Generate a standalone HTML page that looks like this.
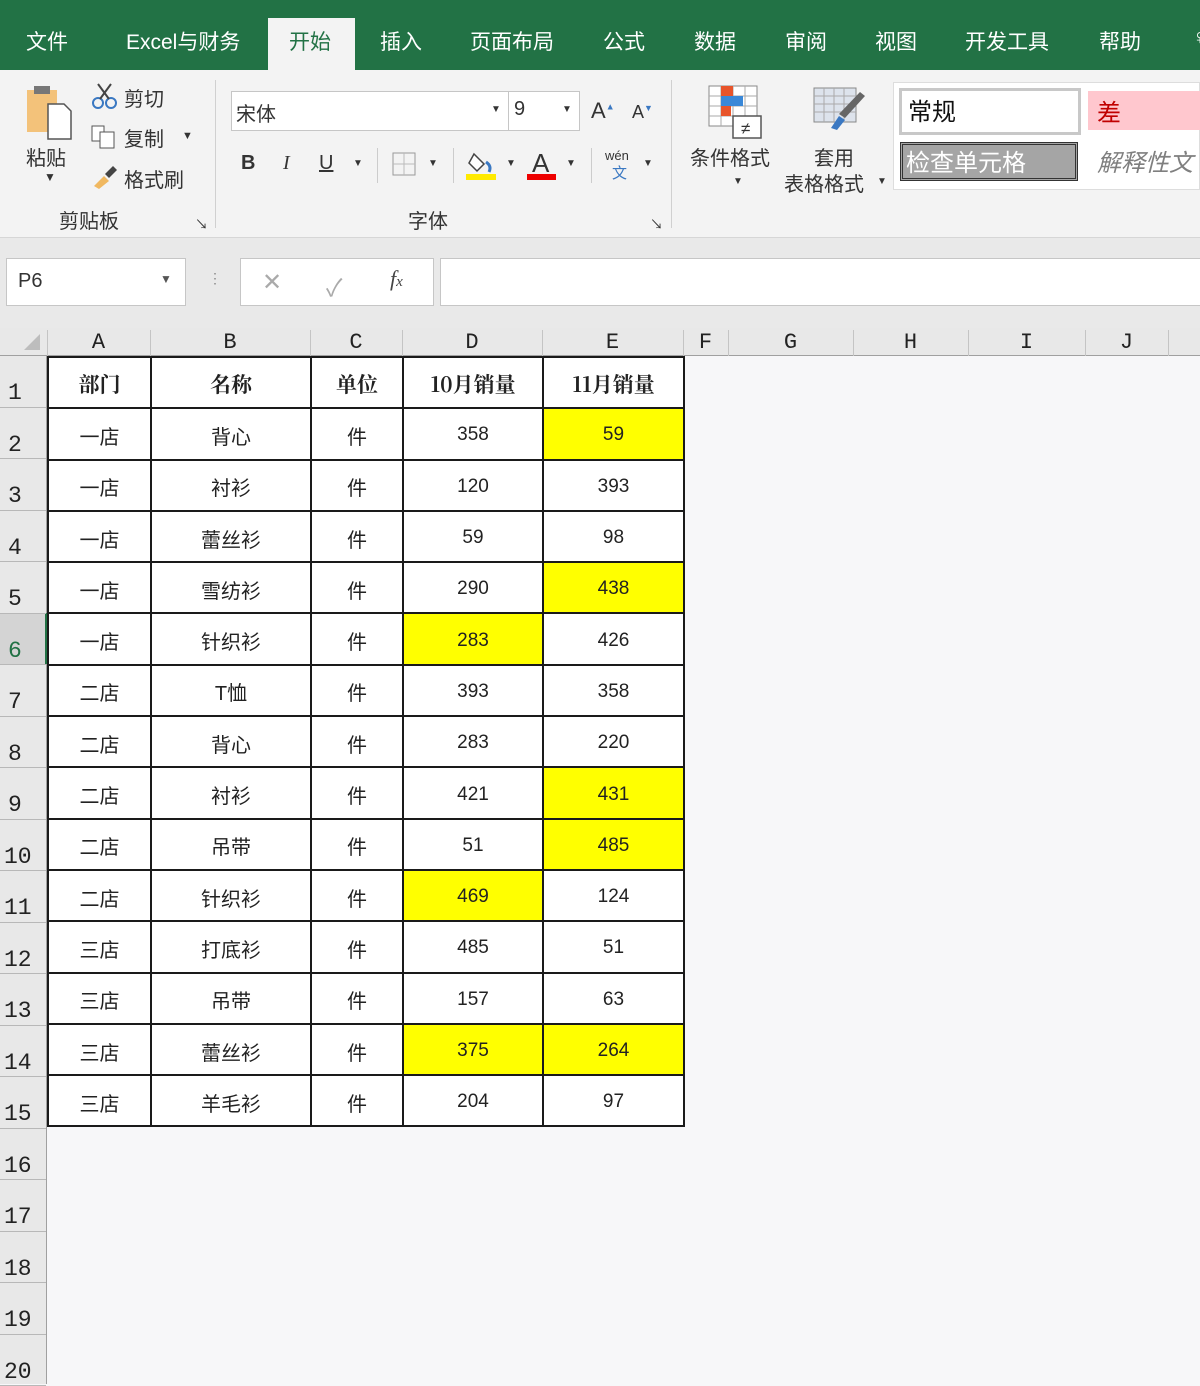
<!DOCTYPE html>
<html><head><meta charset="utf-8">
<style>
*{margin:0;padding:0;box-sizing:border-box}
body{width:1200px;height:1384px;overflow:hidden;background:#f7f7f9;font-family:"Liberation Sans","Noto Sans CJK SC",sans-serif;position:relative;color:#222}
.a{position:absolute}
.tabs{left:0;top:0;width:1200px;height:70px;background:#227245}
.tab{position:absolute;top:26px;color:#fff;font-size:21px;white-space:nowrap}
.ribbon{left:0;top:70px;width:1200px;height:168px;background:#f3f3f3;border-bottom:1px solid #d6d6d6}
.fbar{left:0;top:238px;width:1200px;height:90px;background:#e9e9e9}
.t{position:absolute;font-size:20px;color:#333;white-space:nowrap}
.box{position:absolute;background:#fff;border:1px solid #c6c6c6}
.colh{left:0;top:328px;width:1200px;height:28px;background:#e8e8e8;border-bottom:1px solid #a0a0a0}
.ch{position:absolute;top:330px;font-family:"Liberation Mono",monospace;font-size:22px;color:#222;text-align:center}
.cl{position:absolute;top:330px;width:1px;height:26px;background:#c4c4c4}
.rowh{left:0;top:356px;width:47px;height:1028px;background:#e8e8e8;border-right:1px solid #a0a0a0}
.rn{position:absolute;left:0;width:46px;font-family:"Liberation Mono",monospace;font-size:23px;color:#222;padding-left:8px;border-bottom:1px solid #b8b8b8}
table{position:absolute;left:47px;top:356px;border-collapse:collapse;table-layout:fixed;background:#fff}
td{border:2px solid #1a1a1a;height:51.3px;text-align:center;font-size:20px;padding-top:3px;font-family:"Liberation Sans","Noto Sans CJK SC",sans-serif}
tr.h td{font-weight:bold;font-family:"Noto Serif CJK SC","Noto Sans CJK SC",serif;font-size:21px}
td.y{background:#ffff00}
.n{font-size:19px}
</style></head><body>
<div class="a tabs"></div>
<div class="a" style="left:268px;top:18px;width:87px;height:54px;background:#f3f3f3"></div>
<div class="tab" style="left:26px">文件</div>
<div class="tab" style="left:126px">Excel与财务</div>
<div class="tab" style="left:289px;color:#227245">开始</div>
<div class="tab" style="left:380px">插入</div>
<div class="tab" style="left:470px">页面布局</div>
<div class="tab" style="left:603px">公式</div>
<div class="tab" style="left:694px">数据</div>
<div class="tab" style="left:785px">审阅</div>
<div class="tab" style="left:875px">视图</div>
<div class="tab" style="left:965px">开发工具</div>
<div class="tab" style="left:1099px">帮助</div>
<div class="tab" style="left:1192px">♀</div>

<div class="a ribbon"></div>
<svg class="a" style="left:24px;top:84px" width="56" height="56"><rect x="3" y="6" width="30" height="42" fill="#f3c27a"/><rect x="10" y="2" width="16" height="8" fill="#777"/><path d="M24 20h16l7 7v28H24z" fill="#fff" stroke="#555" stroke-width="1.5"/></svg>
<div class="t" style="left:26px;top:142px">粘贴</div>
<div class="t" style="left:44px;top:170px;font-size:12px">▼</div>
<svg class="a" style="left:91px;top:82px" width="28" height="28"><circle cx="7" cy="21" r="5" fill="none" stroke="#3a78c2" stroke-width="2"/><circle cx="20" cy="21" r="5" fill="none" stroke="#3a78c2" stroke-width="2"/><path d="M9 17L20 2M18 17L7 2" stroke="#444" stroke-width="2"/></svg>
<div class="t" style="left:124px;top:83px">剪切</div>
<svg class="a" style="left:91px;top:124px" width="28" height="26"><rect x="1" y="2" width="12" height="15" fill="#fff" stroke="#555"/><rect x="9" y="8" width="14" height="16" fill="#fff" stroke="#555"/></svg>
<div class="t" style="left:124px;top:123px">复制</div>
<div class="t" style="left:182px;top:130px;font-size:11px">▼</div>
<svg class="a" style="left:91px;top:164px" width="30" height="26"><path d="M3 22l10-10 5 5-10 8z" fill="#f0b860"/><path d="M14 10l8-8 4 4-8 8z" fill="#444"/></svg>
<div class="t" style="left:124px;top:164px">格式刷</div>
<div class="t" style="left:59px;top:205px">剪贴板</div>
<div class="t" style="left:195px;top:214px;font-size:13px">↘</div>
<div class="a" style="left:215px;top:80px;width:1px;height:148px;background:#d0d0d0"></div>
<div class="box" style="left:231px;top:91px;width:278px;height:40px"></div>
<div class="t" style="left:236px;top:98px">宋体</div>
<div class="t" style="left:491px;top:104px;font-size:10px">▼</div>
<div class="box" style="left:508px;top:91px;width:72px;height:40px"></div>
<div class="t" style="left:514px;top:98px">9</div>
<div class="t" style="left:562px;top:104px;font-size:10px">▼</div>
<div class="t" style="left:591px;top:98px;font-size:22px">A<sup style="font-size:9px;color:#3a78c2">▲</sup></div>
<div class="t" style="left:632px;top:102px;font-size:18px">A<sup style="font-size:9px;color:#3a78c2">▼</sup></div>
<div class="t" style="left:241px;top:152px;font-weight:bold">B</div>
<div class="t" style="left:283px;top:152px;font-style:italic;font-family:'Liberation Serif',serif">I</div>
<div class="t" style="left:319px;top:152px;text-decoration:underline">U</div>
<div class="t" style="left:353px;top:158px;font-size:10px">▼</div>
<div class="a" style="left:377px;top:148px;width:1px;height:35px;background:#ccc"></div>
<svg class="a" style="left:392px;top:152px" width="24" height="24"><rect x="1" y="1" width="22" height="22" fill="none" stroke="#999"/><path d="M12 1v22M1 12h22" stroke="#bbb"/></svg>
<div class="t" style="left:428px;top:158px;font-size:10px">▼</div>
<div class="a" style="left:453px;top:148px;width:1px;height:35px;background:#ccc"></div>
<svg class="a" style="left:466px;top:148px" width="32" height="34"><path d="M8 6l10 10-7 7-8-8z" fill="#fff" stroke="#444" stroke-width="1.5"/><path d="M20 14q6 4 3 10" fill="none" stroke="#3a78c2" stroke-width="3"/><rect x="0" y="26" width="30" height="6" fill="#ffea00"/></svg>
<div class="t" style="left:506px;top:158px;font-size:10px">▼</div>
<div class="t" style="left:532px;top:148px;font-size:26px">A</div>
<div class="a" style="left:527px;top:174px;width:29px;height:6px;background:#e00"></div>
<div class="t" style="left:566px;top:158px;font-size:10px">▼</div>
<div class="a" style="left:591px;top:148px;width:1px;height:35px;background:#ccc"></div>
<div class="t" style="left:605px;top:148px;font-size:13px">wén</div>
<div class="t" style="left:612px;top:162px;font-size:15px;color:#3a78c2">文</div>
<div class="t" style="left:643px;top:158px;font-size:10px">▼</div>
<div class="t" style="left:408px;top:205px">字体</div>
<div class="t" style="left:650px;top:214px;font-size:13px">↘</div>
<div class="a" style="left:671px;top:80px;width:1px;height:148px;background:#d0d0d0"></div>
<svg class="a" style="left:707px;top:84px" width="56" height="56"><g fill="#fff" stroke="#888"><rect x="2" y="2" width="48" height="40"/></g><path d="M2 12h48M2 22h48M2 32h48M14 2v40M26 2v40M38 2v40" stroke="#aaa"/><rect x="14" y="2" width="12" height="10" fill="#e8542a"/><rect x="14" y="12" width="22" height="10" fill="#3a88d8"/><rect x="14" y="22" width="10" height="10" fill="#e8542a"/><rect x="26" y="32" width="28" height="22" fill="#fff" stroke="#555" stroke-width="1.5"/><text x="34" y="50" font-size="17" fill="#333">≠</text></svg>
<div class="t" style="left:690px;top:142px">条件格式</div>
<div class="t" style="left:733px;top:176px;font-size:10px">▼</div>
<svg class="a" style="left:812px;top:86px" width="56" height="52"><rect x="2" y="2" width="42" height="34" fill="#dde3ec" stroke="#888"/><path d="M2 10h42M2 18h42M2 26h42M12 2v34M22 2v34M32 2v34" stroke="#aaa"/><path d="M48 6l5 4-20 22-6-4z" fill="#666"/><path d="M27 30l6 4-8 10-6-2z" fill="#3a78c2"/></svg>
<div class="t" style="left:814px;top:142px">套用</div>
<div class="t" style="left:784px;top:168px">表格格式</div>
<div class="t" style="left:877px;top:176px;font-size:10px">▼</div>
<div class="a" style="left:893px;top:82px;width:307px;height:108px;background:#fff;border:1px solid #ddd"></div>
<div class="a" style="left:899px;top:88px;width:182px;height:47px;background:#fff;border:3px solid #c8c8c8"></div>
<div class="t" style="left:908px;top:92px;font-size:24px;color:#111">常规</div>
<div class="a" style="left:1088px;top:91px;width:112px;height:39px;background:#ffc7ce"></div>
<div class="t" style="left:1097px;top:93px;font-size:24px;color:#c00000">差</div>
<div class="a" style="left:900px;top:142px;width:178px;height:39px;background:#a5a5a5;border:3px double #333"></div>
<div class="t" style="left:906px;top:143px;font-size:24px;color:#fff">检查单元格</div>
<div class="t" style="left:1097px;top:143px;font-size:24px;color:#7f7f7f;font-style:italic">解释性文</div>

<div class="a fbar"></div>
<div class="box" style="left:6px;top:258px;width:180px;height:48px"></div>
<div class="t" style="left:18px;top:270px;font-size:20px">P6</div>
<div class="t" style="left:160px;top:272px;font-size:12px;color:#555">▼</div>
<div class="t" style="left:208px;top:270px;font-size:14px;color:#888">⋮</div>
<div class="box" style="left:240px;top:258px;width:194px;height:48px"></div>
<div class="t" style="left:262px;top:268px;font-size:24px;color:#aaa">✕</div>
<div class="t" style="left:326px;top:268px;font-size:24px;color:#aaa">✓</div>
<div class="t" style="left:390px;top:266px;font-size:22px;font-style:italic;font-family:'Liberation Serif',serif;color:#444">f<span style="font-size:15px">x</span></div>
<div class="box" style="left:440px;top:258px;width:770px;height:48px"></div>

<div class="a colh"></div>
<svg class="a" style="left:22px;top:332px" width="20" height="20"><path d="M18 2V18H2z" fill="#bdbdbd"/></svg>
<div class="cl" style="left:47px"></div><div class="cl" style="left:150px"></div><div class="cl" style="left:310px"></div><div class="cl" style="left:402px"></div><div class="cl" style="left:542px"></div><div class="cl" style="left:683px"></div><div class="cl" style="left:728px"></div><div class="cl" style="left:853px"></div><div class="cl" style="left:968px"></div><div class="cl" style="left:1085px"></div><div class="cl" style="left:1168px"></div>
<div class="ch" style="left:47px;width:103px">A</div><div class="ch" style="left:150px;width:160px">B</div><div class="ch" style="left:310px;width:92px">C</div><div class="ch" style="left:402px;width:140px">D</div><div class="ch" style="left:542px;width:141px">E</div><div class="ch" style="left:683px;width:45px">F</div><div class="ch" style="left:728px;width:125px">G</div><div class="ch" style="left:853px;width:115px">H</div><div class="ch" style="left:968px;width:117px">I</div><div class="ch" style="left:1085px;width:83px">J</div>

<div class="a rowh"></div>
<div class="a" style="left:0;top:613px;width:47px;height:51px;background:#d4d4d4"></div>
<div class="a" style="left:45px;top:613px;width:2px;height:51px;background:#227245"></div>
<div class="rn" style="top:356px;height:51.5px;padding-top:24px">1</div>
<div class="rn" style="top:407.5px;height:51.5px;padding-top:24px">2</div>
<div class="rn" style="top:459px;height:51.5px;padding-top:24px">3</div>
<div class="rn" style="top:510.5px;height:51.5px;padding-top:24px">4</div>
<div class="rn" style="top:562px;height:51.5px;padding-top:24px">5</div>
<div class="rn" style="top:613.5px;height:51.5px;padding-top:24px;color:#227245">6</div>
<div class="rn" style="top:665px;height:51.5px;padding-top:24px">7</div>
<div class="rn" style="top:716.5px;height:51.5px;padding-top:24px">8</div>
<div class="rn" style="top:768px;height:51.5px;padding-top:24px">9</div>
<div class="rn" style="top:819.5px;height:51.5px;padding-top:24px;padding-left:4px">10</div>
<div class="rn" style="top:871px;height:51.5px;padding-top:24px;padding-left:4px">11</div>
<div class="rn" style="top:922.5px;height:51.5px;padding-top:24px;padding-left:4px">12</div>
<div class="rn" style="top:974px;height:51.5px;padding-top:24px;padding-left:4px">13</div>
<div class="rn" style="top:1025.5px;height:51.5px;padding-top:24px;padding-left:4px">14</div>
<div class="rn" style="top:1077px;height:51.5px;padding-top:24px;padding-left:4px">15</div>
<div class="rn" style="top:1128.5px;height:51.5px;padding-top:24px;padding-left:4px">16</div>
<div class="rn" style="top:1180px;height:51.5px;padding-top:24px;padding-left:4px">17</div>
<div class="rn" style="top:1231.5px;height:51.5px;padding-top:24px;padding-left:4px">18</div>
<div class="rn" style="top:1283px;height:51.5px;padding-top:24px;padding-left:4px">19</div>
<div class="rn" style="top:1334.5px;height:51.5px;padding-top:24px;padding-left:4px">20</div>

<table>
<colgroup><col style="width:103px"><col style="width:160px"><col style="width:92px"><col style="width:140px"><col style="width:141px"></colgroup>
<tr class="h"><td>部门</td><td>名称</td><td>单位</td><td>10月销量</td><td>11月销量</td></tr>
<tr><td>一店</td><td>背心</td><td>件</td><td class="n">358</td><td class="n y">59</td></tr>
<tr><td>一店</td><td>衬衫</td><td>件</td><td class="n">120</td><td class="n">393</td></tr>
<tr><td>一店</td><td>蕾丝衫</td><td>件</td><td class="n">59</td><td class="n">98</td></tr>
<tr><td>一店</td><td>雪纺衫</td><td>件</td><td class="n">290</td><td class="n y">438</td></tr>
<tr><td>一店</td><td>针织衫</td><td>件</td><td class="n y">283</td><td class="n">426</td></tr>
<tr><td>二店</td><td>T恤</td><td>件</td><td class="n">393</td><td class="n">358</td></tr>
<tr><td>二店</td><td>背心</td><td>件</td><td class="n">283</td><td class="n">220</td></tr>
<tr><td>二店</td><td>衬衫</td><td>件</td><td class="n">421</td><td class="n y">431</td></tr>
<tr><td>二店</td><td>吊带</td><td>件</td><td class="n">51</td><td class="n y">485</td></tr>
<tr><td>二店</td><td>针织衫</td><td>件</td><td class="n y">469</td><td class="n">124</td></tr>
<tr><td>三店</td><td>打底衫</td><td>件</td><td class="n">485</td><td class="n">51</td></tr>
<tr><td>三店</td><td>吊带</td><td>件</td><td class="n">157</td><td class="n">63</td></tr>
<tr><td>三店</td><td>蕾丝衫</td><td>件</td><td class="n y">375</td><td class="n y">264</td></tr>
<tr><td>三店</td><td>羊毛衫</td><td>件</td><td class="n">204</td><td class="n">97</td></tr>
</table>
</body></html>
